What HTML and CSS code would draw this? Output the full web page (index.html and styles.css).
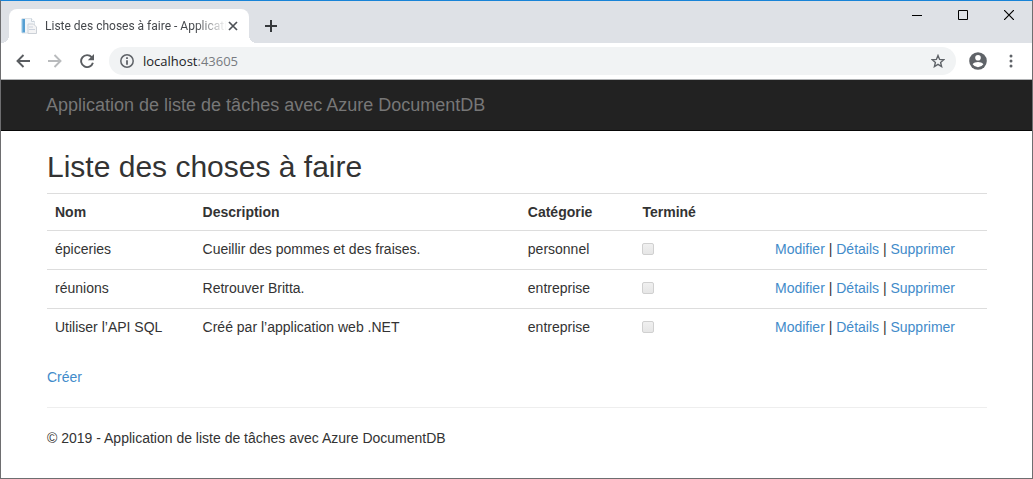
FILE: index.html
```html
<!DOCTYPE html>
<html lang="fr">
<head>
<meta charset="utf-8">
<title>Liste des choses à faire</title>
<link rel="stylesheet" href="styles.css">
</head>
<body>
<div class="window">
  <header class="tabstrip">
    <div class="tab">
      <svg class="favicon" width="16" height="16" viewBox="0 0 16 16" aria-hidden="true">
        <path d="M1 .5h9.500l3 3V15H1z" fill="#f3f6f9" stroke="#dde3e8"/>
        <path d="M1 1h3v13.500H1z" fill="#569fd2"/>
        <path d="M.5 1h1v13.500h-1z" fill="#a5d2ed"/>
        <path d="M10.500.5v3h3" fill="#fff" stroke="#ccd4dc"/>
        <path d="M7 6h5.500l3 3v6.500H7z" fill="#f4f4f5" stroke="#ccd1d7"/>
        <path d="M8 9h4M8 11.500h6" stroke="#ccd3de"/>
      </svg>
      <span class="tab-title">Liste des choses à faire - Applicati</span>
      <button class="tab-close" aria-label="Fermer l’onglet"><svg width="10" height="10" viewBox="0 0 10 10"><path d="M1 1l8 8M9 1L1 9" stroke="#4d5156" stroke-width="1.700"/></svg></button>
    </div>
    <button class="new-tab" aria-label="Nouvel onglet"><svg width="12" height="12" viewBox="0 0 12 12"><path d="M6 0v12M0 6h12" stroke="#35383b" stroke-width="2"/></svg></button>
    <div class="window-buttons">
      <button aria-label="Réduire"><svg width="10" height="10" viewBox="0 0 10 10"><path d="M0 5.500h10" stroke="#000"/></svg></button>
      <button aria-label="Agrandir"><svg width="10" height="10" viewBox="0 0 10 10"><path d="M.5.5h9v9h-9z" fill="none" stroke="#000"/></svg></button>
      <button aria-label="Fermer"><svg width="10" height="10" viewBox="0 0 10 10"><path d="M0 0l10 10M10 0L0 10" stroke="#000" stroke-width="1.200"/></svg></button>
    </div>
  </header>
  <div class="toolbar">
    <div class="nav-buttons">
      <button aria-label="Retour"><svg width="14" height="14" viewBox="0 0 14 14"><path d="M14 7H1.500M7.500 1L1.500 7l6 6" fill="none" stroke="#5a5d61" stroke-width="1.900"/></svg></button>
      <button aria-label="Avancer"><svg width="14" height="14" viewBox="0 0 14 14"><path d="M0 7h12.500M6.500 1l6 6-6 6" fill="none" stroke="#b9bbbd" stroke-width="1.900"/></svg></button>
      <button aria-label="Actualiser"><svg width="14" height="14" viewBox="0 0 14 14"><path d="M11.700 3.200A6 6 0 1 0 12.900 8.700" fill="none" stroke="#5a5d61" stroke-width="1.900"/><path d="M14 0v6.200H7.800z" fill="#5a5d61"/></svg></button>
    </div>
    <div class="omnibox">
      <svg width="14" height="14" viewBox="0 0 14 14" aria-hidden="true"><circle cx="7" cy="7" r="6.200" fill="none" stroke="#5f6368" stroke-width="1.500"/><path d="M6.100 3.300h1.800v1.700H6.100zM6.100 6.200h1.800v4.500H6.100z" fill="#5f6368"/></svg>
      <span class="url">localhost<span class="port">:43605</span></span>
      <button class="star" aria-label="Ajouter aux favoris"><svg width="14" height="14" viewBox="0 0 14 14"><path d="M7 1.500l1.600 3.900 4.200.3-3.200 2.700 1 4.200L7 10.400l-3.600 2.200 1-4.200L1.200 5.700l4.200-.3z" fill="none" stroke="#5f6368" stroke-width="1.400"/></svg></button>
    </div>
    <button class="profile" aria-label="Profil"><svg width="18" height="18" viewBox="0 0 18 18"><circle cx="9" cy="9" r="8.800" fill="#5f6368"/><circle cx="9" cy="5.700" r="2.800" fill="#fff"/><path d="M3.600 12.300C4.500 10.700 7 10 9 10s4.500.7 5.400 2.300A6.500 6.500 0 0 1 9 15.200a6.500 6.500 0 0 1-5.400-2.900z" fill="#fff"/></svg></button>
    <button class="menu" aria-label="Menu"><svg width="4" height="14" viewBox="0 0 4 14"><g fill="#5f6368"><circle cx="2" cy="2" r="1.500"/><circle cx="2" cy="7" r="1.500"/><circle cx="2" cy="12" r="1.500"/></g></svg></button>
  </div>
  <nav class="navbar"><a class="brand" href="#">Application de liste de tâches avec Azure DocumentDB</a></nav>
  <main class="content">
    <h2>Liste des choses à faire</h2>
    <table class="items">
      <colgroup><col class="col-name"><col class="col-description"><col class="col-category"><col class="col-done"><col></colgroup>
      <thead>
        <tr><th>Nom</th><th>Description</th><th>Catégorie</th><th>Terminé</th><th></th></tr>
      </thead>
      <tbody>
        <tr><td>épiceries</td><td>Cueillir des pommes et des fraises.</td><td>personnel</td><td><input type="checkbox" aria-label="Terminé : épiceries" disabled></td><td><a href="#">Modifier</a> | <a href="#">Détails</a> | <a href="#">Supprimer</a></td></tr>
        <tr><td>réunions</td><td>Retrouver Britta.</td><td>entreprise</td><td><input type="checkbox" aria-label="Terminé : réunions" disabled></td><td><a href="#">Modifier</a> | <a href="#">Détails</a> | <a href="#">Supprimer</a></td></tr>
        <tr><td>Utiliser l’API SQL</td><td>Créé par l’application web .NET</td><td>entreprise</td><td><input type="checkbox" aria-label="Terminé : Utiliser l’API SQL" disabled></td><td><a href="#">Modifier</a> | <a href="#">Détails</a> | <a href="#">Supprimer</a></td></tr>
      </tbody>
    </table>
    <p><a href="#">Créer</a></p>
    <hr>
    <footer>© 2019 - Application de liste de tâches avec Azure DocumentDB</footer>
  </main>
</div>
</body>
</html>
```
FILE: styles.css
```css
* { box-sizing: border-box; }
body {
  margin: 0;
  background: #fff;
  color: #333;
  font: 14px/20px "Liberation Sans", Arial, sans-serif;
}
a { color: #428bca; text-decoration: none; }
button {
  display: flex;
  align-items: center;
  justify-content: center;
  padding: 0;
  border: 0;
  background: none;
}
svg { display: block; flex: none; }

.window {
  min-height: 100vh;
  border: 1px solid #6e6e70;
  border-top-color: #1883d7;
}

.tabstrip {
  display: flex;
  height: 42px;
  padding: 8px 0 0 8px;
  background: #dee1e6;
}
.tab {
  position: relative;
  display: flex;
  align-items: center;
  width: 240px;
  padding: 0 10px 0 12px;
  border-radius: 8px 8px 0 0;
  background: #fff;
}
.tab::before,
.tab::after {
  content: "";
  position: absolute;
  bottom: 0;
  width: 8px;
  height: 8px;
}
.tab::before {
  right: 100%;
  background: radial-gradient(circle at 0 0, transparent 8px, #fff 8px);
}
.tab::after {
  left: 100%;
  background: radial-gradient(circle at 100% 0, transparent 8px, #fff 8px);
}
.tab-title {
  flex: 1;
  min-width: 0;
  margin-left: 8px;
  white-space: nowrap;
  color: #45484c;
  font: 12px/20px Roboto, sans-serif;
  -webkit-mask-image: linear-gradient(to left, transparent, #000 32px);
  mask-image: linear-gradient(to left, transparent, #000 32px);
}
.tab-close { width: 12px; height: 16px; }
.new-tab { width: 28px; height: 34px; margin-left: 8px; }
.window-buttons { display: flex; margin: -8px 0 0 auto; }
.window-buttons button { width: 46px; height: 28px; }

.toolbar {
  display: flex;
  align-items: center;
  height: 37px;
  padding: 0 11px 0 8px;
  border-bottom: 1px solid #b0b2b4;
  background: #fff;
}
.nav-buttons { display: flex; gap: 4px; margin-right: 8px; }
.nav-buttons button { width: 28px; height: 28px; }
.omnibox {
  display: flex;
  flex: 1;
  align-items: center;
  height: 28px;
  padding: 0 11px;
  border-radius: 14px;
  background: #f1f3f4;
}
.url {
  flex: 1;
  margin-left: 9px;
  color: #202124;
  font: 13px/20px "Open Sans", sans-serif;
}
.port { color: #777b80; }
.profile { width: 18px; height: 28px; margin-left: 13px; }
.menu { width: 20px; height: 28px; margin-left: 14px; }

.navbar {
  padding: 15px 45px;
  border-bottom: 1px solid #080808;
  background: #222;
}
.brand {
  display: block;
  color: #777;
  font-size: 18px;
  line-height: 20px;
}

.content { padding: 19px 45px 30px 46px; }
h2 {
  margin: 0 0 10px;
  font-size: 30px;
  font-weight: 400;
  line-height: 33px;
}
.items {
  width: 100%;
  margin-bottom: 20px;
  border-collapse: separate;
  border-spacing: 0;
  table-layout: fixed;
}
.col-name { width: 15.7%; }
.col-description { width: 34.6%; }
.col-category { width: 12.2%; }
.col-done { width: 14.1%; }
th, td {
  padding: 8px;
  border-top: 1px solid #ddd;
  text-align: left;
  vertical-align: top;
}
td { padding-bottom: 10px; }
td input {
  display: block;
  appearance: none;
  width: 12px;
  height: 12px;
  margin: 4px 0;
  border: 1px solid #d0d0d0;
  border-radius: 2px;
  background: linear-gradient(#f0f0f0, #e6e6e6);
}
p { margin: 0 0 20px; }
hr {
  margin: 0 0 20px;
  border: 0;
  border-top: 1px solid #eee;
}
```
